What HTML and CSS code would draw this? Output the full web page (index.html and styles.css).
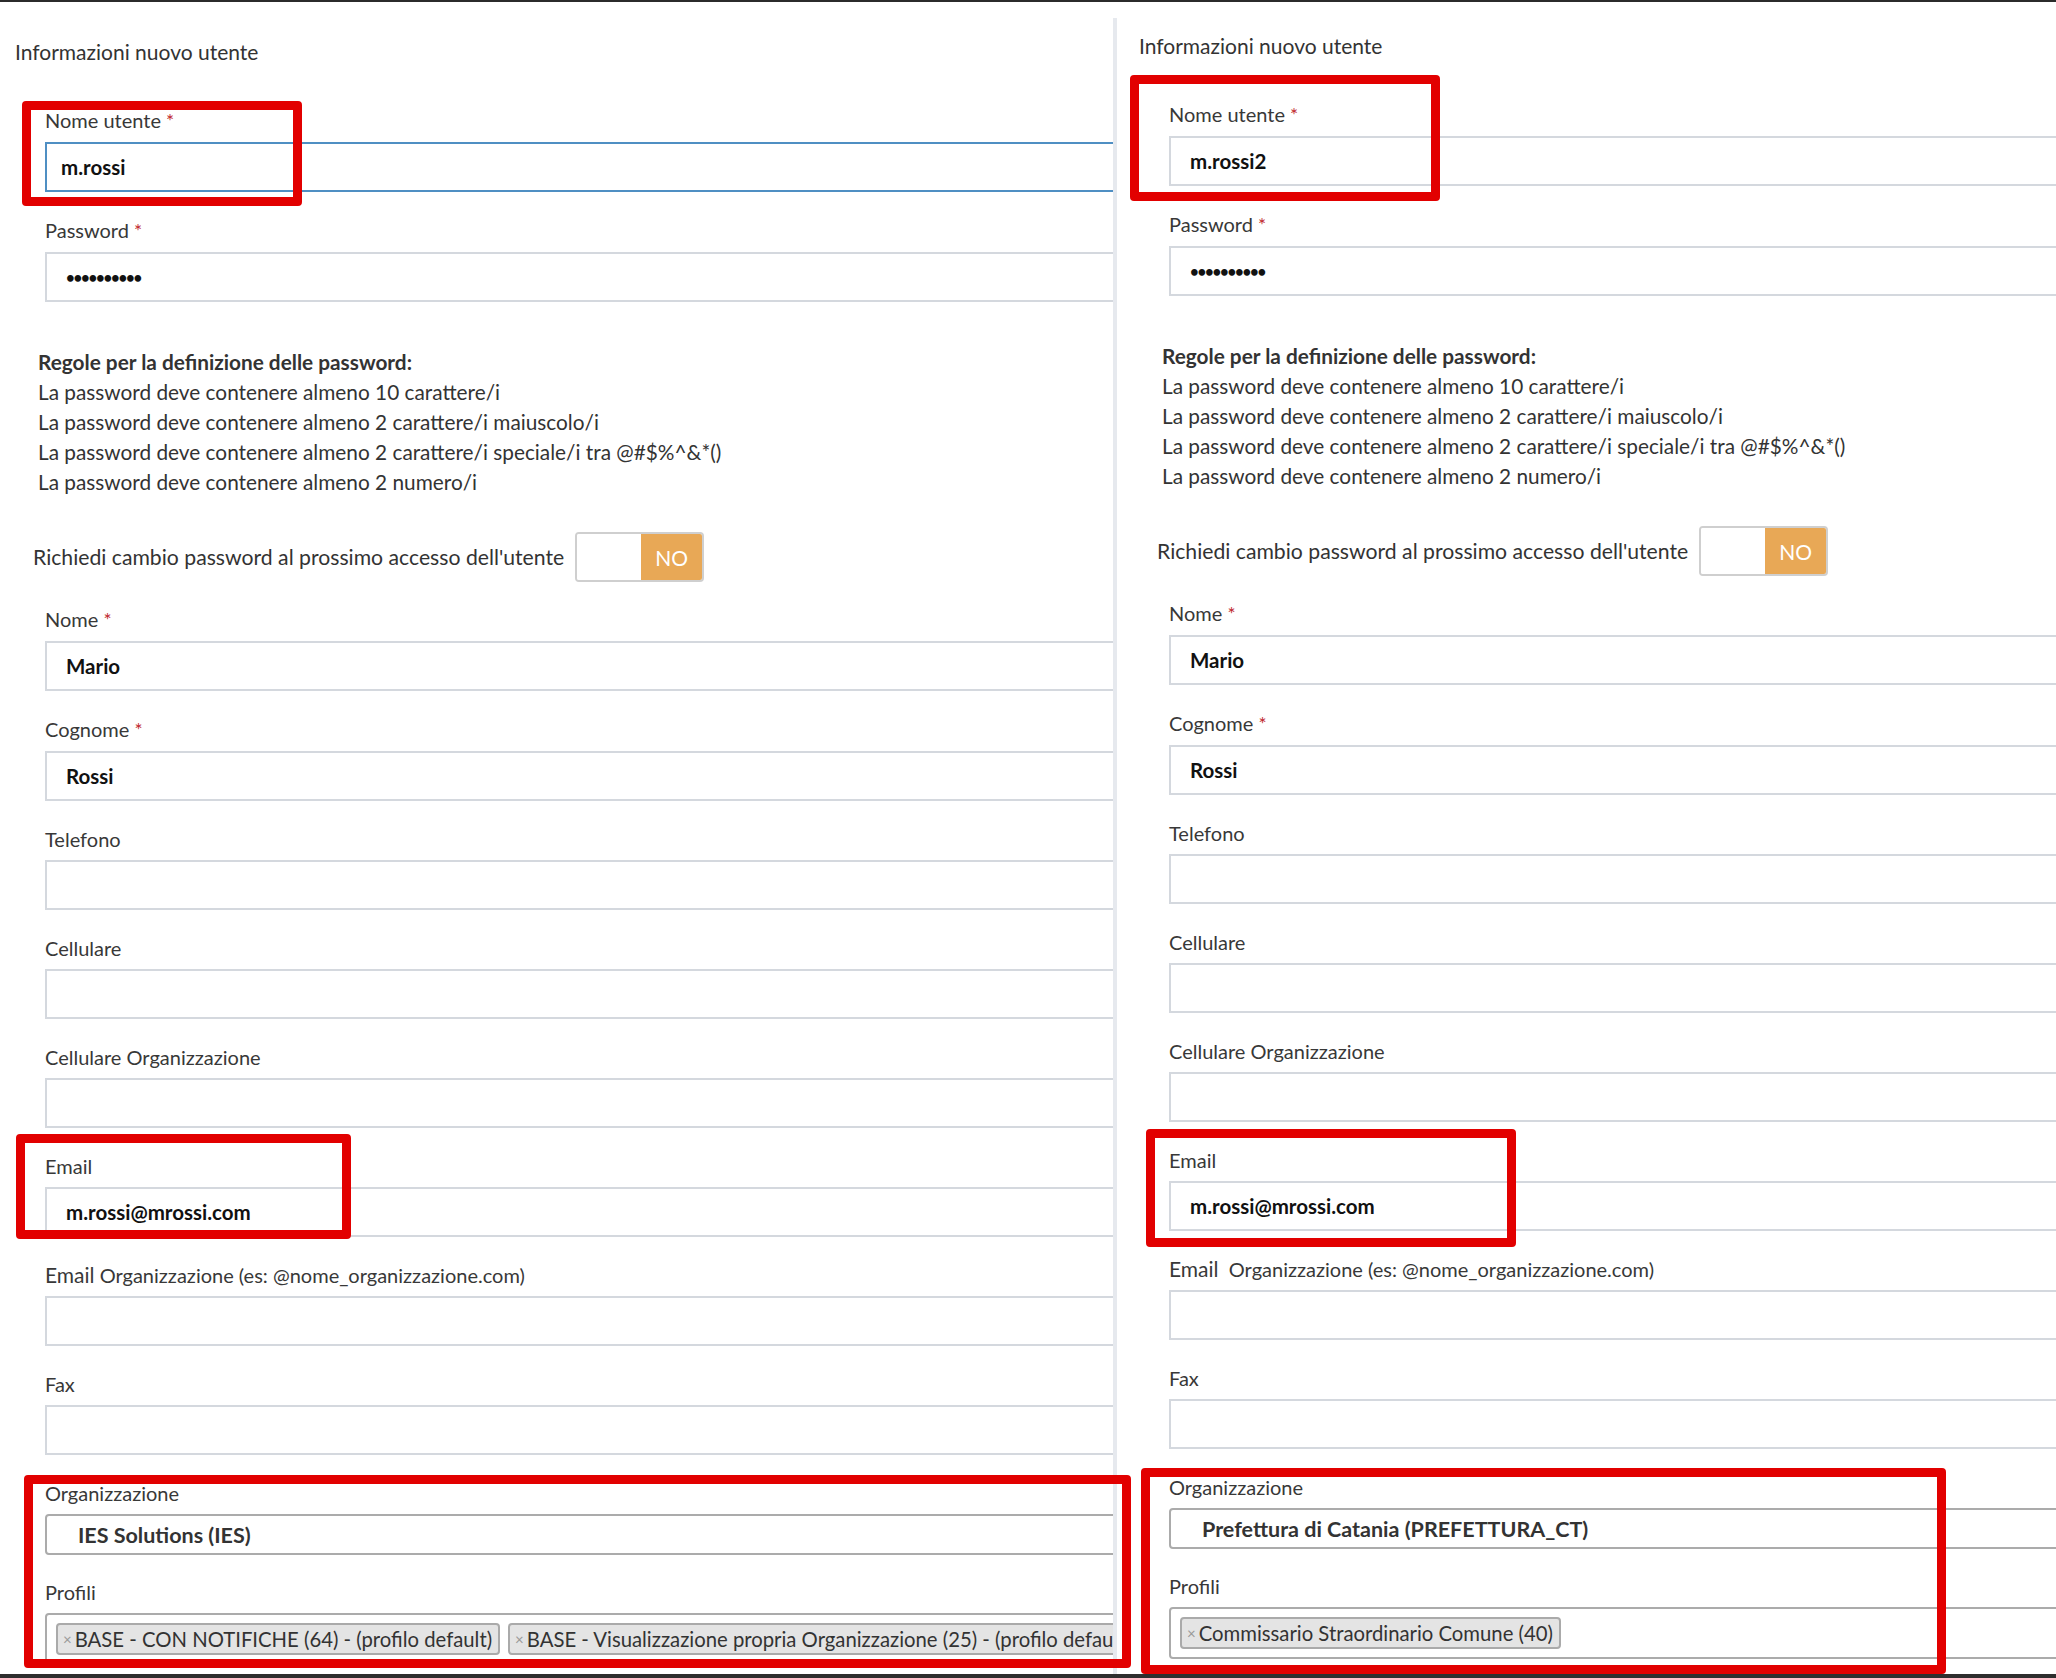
FILE: index.html
```html
<!DOCTYPE html>
<html>
<head>
  <meta charset="utf-8">
  <title>Informazioni nuovo utente</title>
  <link rel="stylesheet" href="styles.css">
</head>
<body>
  <div class="screen">

    <!-- colonna sinistra -->
    <section class="panel panel-left">
      <h3 class="panel-title">Informazioni nuovo utente</h3>

      <div class="field">
        <label>Nome utente <span class="req">*</span></label>
        <input class="text-input focused" type="text" value="m.rossi">
      </div>
      <div class="field">
        <label>Password <span class="req">*</span></label>
        <input class="text-input pwd" type="text" value="••••••••••">
      </div>

      <div class="rules">
        <strong>Regole per la definizione delle password:</strong>
        <p>La password deve contenere almeno 10 carattere/i</p>
        <p>La password deve contenere almeno 2 carattere/i maiuscolo/i</p>
        <p>La password deve contenere almeno 2 carattere/i speciale/i tra @#$%^&amp;*()</p>
        <p>La password deve contenere almeno 2 numero/i</p>
      </div>

      <div class="toggle-row">
        <span>Richiedi cambio password al prossimo accesso dell'utente</span>
        <div class="switch"><span class="switch-off"></span><span class="switch-no">NO</span></div>
      </div>

      <div class="field">
        <label>Nome <span class="req">*</span></label>
        <input class="text-input" type="text" value="Mario">
      </div>
      <div class="field">
        <label>Cognome <span class="req">*</span></label>
        <input class="text-input" type="text" value="Rossi">
      </div>
      <div class="field">
        <label>Telefono</label>
        <input class="text-input" type="text" value="">
      </div>
      <div class="field">
        <label>Cellulare</label>
        <input class="text-input" type="text" value="">
      </div>
      <div class="field">
        <label>Cellulare Organizzazione</label>
        <input class="text-input" type="text" value="">
      </div>
      <div class="field">
        <label>Email</label>
        <input class="text-input" type="text" value="m.rossi@mrossi.com">
      </div>
      <div class="field">
        <label><span class="em">Email</span> Organizzazione (es: @nome_organizzazione.com)</label>
        <input class="text-input" type="text" value="">
      </div>
      <div class="field">
        <label>Fax</label>
        <input class="text-input" type="text" value="">
      </div>

      <div class="field field-select">
        <label>Organizzazione</label>
        <div class="select">IES Solutions (IES)</div>
      </div>
      <div class="field">
        <label>Profili</label>
        <div class="multi">
          <span class="tag"><span class="tag-x">×</span>BASE - CON NOTIFICHE (64) - (profilo default)</span>
          <span class="tag"><span class="tag-x">×</span>BASE - Visualizzazione propria Organizzazione (25) - (profilo default)</span>
        </div>
      </div>
    </section>

    <div class="divider"></div>

    <!-- colonna destra -->
    <section class="panel panel-right">
      <h3 class="panel-title">Informazioni nuovo utente</h3>

      <div class="field">
        <label>Nome utente <span class="req">*</span></label>
        <input class="text-input" type="text" value="m.rossi2">
      </div>
      <div class="field">
        <label>Password <span class="req">*</span></label>
        <input class="text-input pwd" type="text" value="••••••••••">
      </div>

      <div class="rules">
        <strong>Regole per la definizione delle password:</strong>
        <p>La password deve contenere almeno 10 carattere/i</p>
        <p>La password deve contenere almeno 2 carattere/i maiuscolo/i</p>
        <p>La password deve contenere almeno 2 carattere/i speciale/i tra @#$%^&amp;*()</p>
        <p>La password deve contenere almeno 2 numero/i</p>
      </div>

      <div class="toggle-row">
        <span>Richiedi cambio password al prossimo accesso dell'utente</span>
        <div class="switch"><span class="switch-off"></span><span class="switch-no">NO</span></div>
      </div>

      <div class="field">
        <label>Nome <span class="req">*</span></label>
        <input class="text-input" type="text" value="Mario">
      </div>
      <div class="field">
        <label>Cognome <span class="req">*</span></label>
        <input class="text-input" type="text" value="Rossi">
      </div>
      <div class="field">
        <label>Telefono</label>
        <input class="text-input" type="text" value="">
      </div>
      <div class="field">
        <label>Cellulare</label>
        <input class="text-input" type="text" value="">
      </div>
      <div class="field">
        <label>Cellulare Organizzazione</label>
        <input class="text-input" type="text" value="">
      </div>
      <div class="field">
        <label>Email</label>
        <input class="text-input" type="text" value="m.rossi@mrossi.com">
      </div>
      <div class="field">
        <label><span class="em">Email</span>&nbsp; Organizzazione (es: @nome_organizzazione.com)</label>
        <input class="text-input" type="text" value="">
      </div>
      <div class="field">
        <label>Fax</label>
        <input class="text-input" type="text" value="">
      </div>

      <div class="field field-select">
        <label>Organizzazione</label>
        <div class="select">Prefettura di Catania (PREFETTURA_CT)</div>
      </div>
      <div class="field">
        <label>Profili</label>
        <div class="multi">
          <span class="tag"><span class="tag-x">×</span>Commissario Straordinario Comune (40)</span>
        </div>
      </div>
    </section>

    <!-- riquadri rossi di evidenziazione -->
    <div class="mark mark-1"></div>
    <div class="mark mark-2"></div>
    <div class="mark mark-3"></div>
    <div class="mark mark-4"></div>
    <div class="mark mark-5"></div>
    <div class="mark mark-6"></div>
  </div>
</body>
</html>
```

FILE: styles.css
```css
* {
  box-sizing: border-box;
}

body {
  margin: 0;
  padding: 0;
  background: #ffffff;
  font-family: 'Lato', 'Noto Sans', sans-serif;
  font-size: 20px;
  color: #333333;
}

.screen {
  position: relative;
  display: flex;
  height: 1678px;
  border-top: 2px solid #2b2b2b;
  border-bottom: 4px solid #2e2e2e;
  overflow: hidden;
}

.panel {
  overflow: hidden;
}

.panel-left {
  width: 1113px;
  flex-shrink: 0;
  padding-top: 35px;
  padding-left: 45px;
}

.panel-right {
  flex: 1;
  padding-top: 29px;
  padding-left: 52px;
}

.divider {
  width: 4px;
  flex-shrink: 0;
  margin-top: 16px;
  background: #e6e9ee;
}

.panel-title {
  margin: 0 0 38px -30px;
  font-size: 21px;
  font-weight: 400;
  line-height: 30px;
  color: #333;
}

/* campi */
.field {
  margin-bottom: 23px;
}

.field label {
  display: block;
  line-height: 30px;
  margin-bottom: 6px;
  color: #383838;
}

.em {
  font-size: 21px;
}

.req {
  color: #c0272d;
  font-size: 19px;
}

.text-input {
  display: block;
  width: calc(100% + 40px);
  height: 50px;
  padding: 0 19px;
  border: 2px solid #d4d8de;
  border-radius: 0;
  font-family: inherit;
  font-size: 20.5px;
  font-weight: 700;
  color: #111;
  background: #fff;
  outline: none;
}

.text-input.focused {
  border-color: #4f8fc3;
  padding-left: 14px;
}

.text-input.pwd {
  font-size: 15px;
  letter-spacing: -1.2px;
}

/* regole password */
.rules {
  margin: 45px 0 35px -7px;
  font-size: 20.8px;
  line-height: 30px;
}

.rules strong {
  display: block;
  font-weight: 700;
}

.rules p {
  margin: 0;
}

/* interruttore */
.toggle-row {
  display: flex;
  align-items: center;
  gap: 11px;
  margin: 0 0 22px -12px;
  height: 50px;
  font-size: 21.2px;
}

.switch {
  display: flex;
  width: 129px;
  height: 50px;
  border: 2px solid #cfcfcf;
  border-radius: 4px;
  overflow: hidden;
}

.switch-off {
  width: 64px;
  background: #fff;
}

.switch-no {
  flex: 1;
  display: flex;
  align-items: center;
  justify-content: center;
  background: #e8a856;
  color: #fff;
  font-size: 21px;
}

/* select organizzazione */
.field-select {
  margin-bottom: 22px;
}

.select {
  width: calc(100% + 40px);
  height: 41px;
  display: flex;
  align-items: center;
  padding-left: 31px;
  border: 2px solid #ababab;
  border-radius: 4px;
  font-size: 21.5px;
  font-weight: 700;
  color: #333;
}

.multi {
  display: flex;
  gap: 8px;
  width: calc(100% + 40px);
  height: 52px;
  padding: 8px 9px;
  border: 2px solid #ababab;
  border-radius: 4px;
  white-space: nowrap;
}

.tag {
  display: inline-flex;
  align-items: center;
  height: 32px;
  padding: 0 6px 0 5px;
  background: #e4e4e4;
  border: 2px solid #aaaaaa;
  border-radius: 4px;
  font-size: 20.3px;
  color: #333;
}

.tag-x {
  color: #999;
  font-size: 15px;
  margin-right: 3px;
}

/* riquadri rossi */
.mark {
  position: absolute;
  border: 9px solid #e20000;
  border-radius: 4px;
}

.mark-1 { left: 22px;   top: 99px;   width: 280px; height: 105px; }
.mark-2 { left: 1130px; top: 73px;   width: 310px; height: 126px; }
.mark-3 { left: 16px;   top: 1132px; width: 335px; height: 105px; }
.mark-4 { left: 1146px; top: 1127px; width: 370px; height: 118px; }
.mark-5 { left: 24px;   top: 1473px; width: 1107px; height: 193px; }
.mark-6 { left: 1141px; top: 1466px; width: 805px; height: 206px; }
```
